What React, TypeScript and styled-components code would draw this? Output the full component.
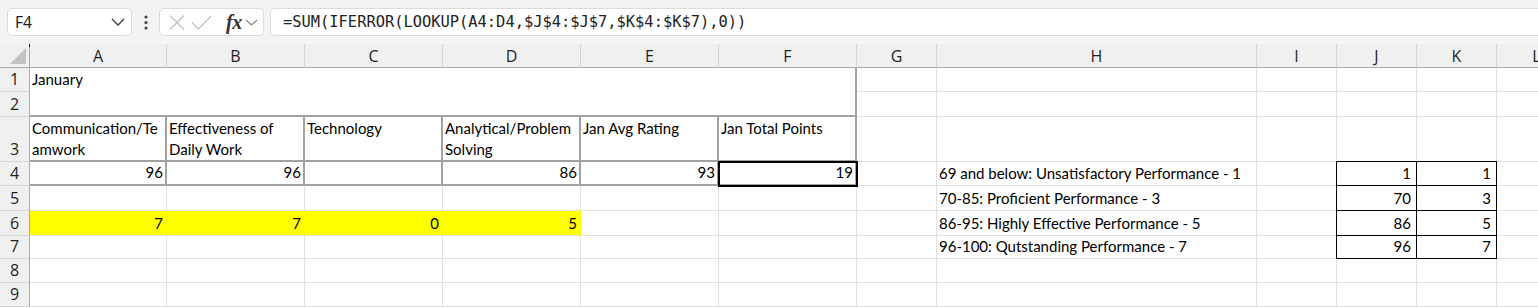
import React from 'react';
import styled, { createGlobalStyle, css } from 'styled-components';

const GlobalStyle = createGlobalStyle`
  html, body {
    margin: 0;
    padding: 0;
    background: #ffffff;
    overflow: hidden;
  }
  body {
    font-family: Lato, 'Liberation Sans', sans-serif;
  }
`;

const Window = styled.div`
  width: 1538px;
  height: 308px;
  overflow: hidden;
  background: #ffffff;
`;

/* ---------- formula bar ---------- */

const Toolbar = styled.div`
  display: flex;
  align-items: center;
  height: 44px;
  box-sizing: border-box;
  padding-left: 7px;
  background: #f3f3f3;
`;

const Field = styled.div`
  height: 28px;
  box-sizing: border-box;
  background: #ffffff;
  border: 1px solid #dcdcdc;
  border-radius: 5px;
  display: flex;
  align-items: center;
`;

const NameBox = styled(Field)`
  width: 125px;
  justify-content: space-between;
  padding: 0 6px 0 7px;
  font: 15.5px 'Noto Sans', 'Open Sans', sans-serif;
  color: #1b1b1b;
`;

const Grip = styled.div`
  width: 27px;
  display: flex;
  justify-content: center;
`;

const FxBox = styled(Field)`
  width: 105px;
  padding-left: 7px;
`;

const IconSlot = styled.span<{ $w: number }>`
  width: ${(p) => p.$w}px;
  display: flex;
  align-items: center;
  justify-content: center;
`;

const FxText = styled.span`
  font: italic bold 20px 'Liberation Serif', 'DejaVu Serif', serif;
  color: #333333;
  letter-spacing: -0.5px;
  margin: 0 3px 0 10px;
  line-height: 1;
`;

const FormulaBox = styled(Field)`
  flex: 1;
  margin-left: 6px;
  margin-right: -8px;
  padding-left: 12px;
  font: 15.4px 'DejaVu Sans Mono', 'Liberation Mono', monospace;
  color: #222222;
  white-space: nowrap;
`;

/* ---------- sheet ---------- */

const Sheet = styled.div`
  display: grid;
  grid-template-columns: 30px 137px 138px 138px 138px 138px 138px 80px 320px 80px 80px 80px 80px;
  grid-template-rows: 24px 24px 25px 45px 24px 25px 25px 23px 24px 24px;
  background: #ffffff;
`;

const Corner = styled.div`
  position: relative;
  background: #f0f0f0;
  border-right: 1px solid #a9a9a9;
  border-bottom: 1px solid #a9a9a9;
  box-sizing: border-box;

  &::before {
    content: '';
    position: absolute;
    right: 3px;
    bottom: 3px;
    border-style: solid;
    border-width: 0 0 16px 16px;
    border-color: transparent transparent #c2c2c2 transparent;
  }

  &::after {
    content: '';
    position: absolute;
    right: -1px;
    top: 0;
    width: 1px;
    height: 3px;
    background: #000000;
  }
`;

const ColHead = styled.div`
  background: #f0f0f0;
  border-right: 1px solid #d6d6d6;
  border-bottom: 1px solid #a9a9a9;
  box-sizing: border-box;
  display: flex;
  align-items: center;
  justify-content: center;
  font: 16px 'Open Sans', 'Noto Sans', sans-serif;
  color: #1f1f1f;
  padding-top: 1px;
`;

const RowHead = styled.div`
  background: #f0f0f0;
  border-right: 1px solid #a9a9a9;
  border-bottom: 1px solid #d6d6d6;
  box-sizing: border-box;
  display: flex;
  align-items: flex-end;
  justify-content: center;
  font: 16px 'Open Sans', 'Noto Sans', sans-serif;
  color: #1f1f1f;
  line-height: 21px;
  padding-bottom: 1px;
`;

type Align = 'left' | 'right';
type Frame = 'grid' | 'table' | 'box';

const Cell = styled.div<{
  $align: Align;
  $top: boolean;
  $frame: Frame;
  $fill?: string;
  $boxTop?: boolean;
  $boxLeft?: boolean;
  $selected?: boolean;
}>`
  box-sizing: border-box;
  display: flex;
  flex-direction: column;
  justify-content: ${(p) => (p.$top ? 'flex-start' : 'flex-end')};
  align-items: ${(p) => (p.$align === 'right' ? 'flex-end' : 'flex-start')};
  padding: ${(p) => (p.$top ? '1px 3px 0 2px' : '0 3px 1px 2px')};
  font-size: 15px;
  line-height: 21px;
  color: #000000;
  white-space: nowrap;
  background: ${(p) => p.$fill ?? 'transparent'};
  border-right: 1px solid ${(p) => p.$fill ?? '#e1e1e1'};
  border-bottom: 1px solid #e1e1e1;

  ${(p) =>
    p.$frame === 'table' &&
    css`
      border-right: 2px solid #a2a2a2;
      border-bottom: 2px solid #a2a2a2;
      padding-right: 2px;
    `}

  ${(p) =>
    p.$frame === 'box' &&
    css`
      border-right: 1px solid #000000;
      border-bottom: 1px solid #000000;
      padding-right: 5px;
      box-shadow: ${[
        p.$boxLeft ? '-1px 0 0 #000000' : '',
        p.$boxTop ? '0 -1px 0 #000000' : '',
        p.$boxLeft && p.$boxTop ? '-1px -1px 0 #000000' : '',
      ]
        .filter(Boolean)
        .join(', ') || 'none'};
    `}

  ${(p) =>
    p.$selected &&
    css`
      position: relative;
      z-index: 2;
      outline: 2px solid #000000;
      outline-offset: -1px;
    `}
`;

const Merged = styled(Cell)`
  grid-column: 2 / span 6;
  grid-row: 2 / span 2;
`;

interface CellSpec {
  text?: React.ReactNode;
  align?: Align;
  top?: boolean;
  frame?: Frame;
  fill?: string;
  boxTop?: boolean;
  boxLeft?: boolean;
  selected?: boolean;
}

const COLS = ['A', 'B', 'C', 'D', 'E', 'F', 'G', 'H', 'I', 'J', 'K', 'L'];
const YELLOW = '#ffff00';

const empty = (n: number): CellSpec[] => Array.from({ length: n }, () => ({}));
const head = (text: React.ReactNode): CellSpec => ({ text, align: 'left', top: true, frame: 'table' });
const value = (text: string, selected = false): CellSpec => ({ text, align: 'right', frame: 'table', selected });
const yellow = (text: string): CellSpec => ({ text, align: 'right', fill: YELLOW });
const scale = (text: string): CellSpec => ({ text, align: 'left' });
const box = (j: string, k: string, first = false): CellSpec[] => [
  { text: j, align: 'right', frame: 'box', boxLeft: true, boxTop: first },
  { text: k, align: 'right', frame: 'box', boxTop: first },
];

const rows: CellSpec[][] = [
  empty(6),
  empty(6),
  [
    head(<>Communication/Te<br />amwork</>),
    head(<>Effectiveness of<br />Daily Work</>),
    head('Technology'),
    head(<>Analytical/Problem<br />Solving</>),
    head('Jan Avg Rating'),
    head('Jan Total Points'),
    ...empty(6),
  ],
  [
    value('96'),
    value('96'),
    value(''),
    value('86'),
    value('93'),
    value('19', true),
    {},
    scale('69 and below: Unsatisfactory Performance - 1'),
    {},
    ...box('1', '1', true),
    {},
  ],
  [...empty(7), scale('70-85: Proficient Performance - 3'), {}, ...box('70', '3'), {}],
  [
    yellow('7'),
    yellow('7'),
    yellow('0'),
    yellow('5'),
    ...empty(3),
    scale('86-95: Highly Effective Performance - 5'),
    {},
    ...box('86', '5'),
    {},
  ],
  [...empty(7), scale('96-100: Qutstanding Performance - 7'), {}, ...box('96', '7'), {}],
  empty(12),
  empty(12),
];

function renderCell(spec: CellSpec, key: string) {
  return (
    <Cell
      key={key}
      $align={spec.align ?? 'left'}
      $top={!!spec.top}
      $frame={spec.frame ?? 'grid'}
      $fill={spec.fill}
      $boxTop={spec.boxTop}
      $boxLeft={spec.boxLeft}
      $selected={spec.selected}
    >
      {spec.text && <span>{spec.text}</span>}
    </Cell>
  );
}

function FormulaBar() {
  return (
    <Toolbar>
      <NameBox>
        <span>F4</span>
        <svg width="14" height="8" viewBox="0 0 14 8">
          <polyline points="1,1 7,7 13,1" fill="none" stroke="#3a3a3a" strokeWidth="1.3" />
        </svg>
      </NameBox>
      <Grip>
        <svg width="4" height="15" viewBox="0 0 4 15">
          <circle cx="2" cy="2" r="1.6" fill="#444444" />
          <circle cx="2" cy="7.5" r="1.6" fill="#444444" />
          <circle cx="2" cy="13" r="1.6" fill="#444444" />
        </svg>
      </Grip>
      <FxBox>
        <IconSlot $w={19}>
          <svg width="16" height="15" viewBox="0 0 16 15">
            <path d="M1 0.5 L15 14.5 M15 0.5 L1 14.5" stroke="#c4c4c4" strokeWidth="1.4" />
          </svg>
        </IconSlot>
        <IconSlot $w={30}>
          <svg width="21" height="15" viewBox="0 0 21 15">
            <polyline points="1,7.5 7.5,14 20,1" fill="none" stroke="#c4c4c4" strokeWidth="1.4" />
          </svg>
        </IconSlot>
        <FxText>fx</FxText>
        <svg width="13" height="7" viewBox="0 0 13 7">
          <polyline points="1,1 6.5,6 12,1" fill="none" stroke="#8a8a8a" strokeWidth="1.2" />
        </svg>
      </FxBox>
      <FormulaBox>=SUM(IFERROR(LOOKUP(A4:D4,$J$4:$J$7,$K$4:$K$7),0))</FormulaBox>
    </Toolbar>
  );
}

export default function App() {
  return (
    <Window>
      <GlobalStyle />
      <FormulaBar />
      <Sheet>
        <Corner />
        {COLS.map((c) => (
          <ColHead key={c}>{c}</ColHead>
        ))}
        {rows.map((cells, r) => {
          const rowNo = r + 1;
          const offset = rowNo <= 2 ? 6 : 0;
          return (
            <React.Fragment key={rowNo}>
              <RowHead>{rowNo}</RowHead>
              {rowNo === 1 && (
                <Merged $align="left" $top $frame="table">
                  <span>January</span>
                </Merged>
              )}
              {cells.map((spec, i) => renderCell(spec, `${COLS[i + offset]}${rowNo}`))}
            </React.Fragment>
          );
        })}
      </Sheet>
    </Window>
  );
}
